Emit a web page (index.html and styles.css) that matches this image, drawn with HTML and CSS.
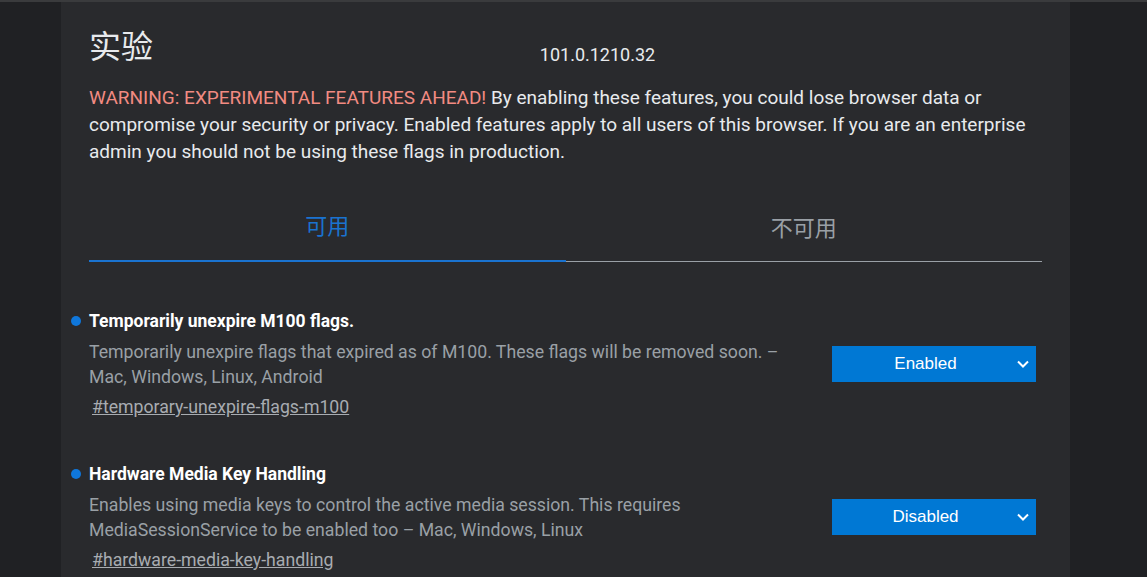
FILE: index.html
```html
<!DOCTYPE html>
<html lang="zh-CN">
<head>
    <meta charset="UTF-8">
    <meta name="viewport" content="width=device-width, initial-scale=1.0">
    <title>实验</title>
    <link rel="stylesheet" href="styles.css">
</head>
<body>
    <main class="page">
        <header class="header">
            <h1>实验</h1>
            <div class="version">101.0.1210.32</div>
        </header>
        <p class="blurb">
            <span class="warning">WARNING: EXPERIMENTAL FEATURES AHEAD!</span>
            By enabling these features, you could lose browser data or compromise your security or privacy. Enabled features apply to all users of this browser. If you are an enterprise admin you should not be using these flags in production.
        </p>

        <nav class="tabs">
            <a href="#available" class="tab active">可用</a>
            <a href="#unavailable" class="tab">不可用</a>
        </nav>

        <section class="flags">
            <div class="flag">
                <div class="flag-text">
                    <h3 class="flag-name"><span class="dot"></span>Temporarily unexpire M100 flags.</h3>
                    <p class="flag-desc">Temporarily unexpire flags that expired as of M100. These flags will be removed soon. – Mac, Windows, Linux, Android</p>
                    <a href="#temporary-unexpire-flags-m100" class="permalink">#temporary-unexpire-flags-m100</a>
                </div>
                <div class="select">
                    <span>Enabled</span>
                    <svg class="chevron" width="12" height="8" viewBox="0 0 12 8"><path d="M1 1.5 6 6.5 11 1.5" fill="none" stroke="#fff" stroke-width="2"/></svg>
                </div>
            </div>

            <div class="flag">
                <div class="flag-text">
                    <h3 class="flag-name"><span class="dot"></span>Hardware Media Key Handling</h3>
                    <p class="flag-desc">Enables using media keys to control the active media session. This requires MediaSessionService to be enabled too – Mac, Windows, Linux</p>
                    <a href="#hardware-media-key-handling" class="permalink">#hardware-media-key-handling</a>
                </div>
                <div class="select">
                    <span>Disabled</span>
                    <svg class="chevron" width="12" height="8" viewBox="0 0 12 8"><path d="M1 1.5 6 6.5 11 1.5" fill="none" stroke="#fff" stroke-width="2"/></svg>
                </div>
            </div>
        </section>
    </main>
</body>
</html>
```

FILE: styles.css
```css
* {
    margin: 0;
    padding: 0;
    box-sizing: border-box;
}
body {
    font-family: Roboto, "Noto Sans CJK SC", sans-serif;
    background-color: #202124;
    border-top: 2px solid #3a3b3d;
    color: #e8eaed;
    height: 100vh;
    overflow: hidden;
}
.page {
    width: 1009px;
    margin-left: 61px;
    min-height: 100%;
    background-color: #292a2d;
    padding: 24px 28px 0;
}
.header {
    display: flex;
    align-items: center;
}
.header h1 {
    font-size: 32px;
    font-weight: normal;
    line-height: 42px;
}
.version {
    flex: 1;
    text-align: center;
    font-size: 18px;
    padding-top: 15px;
}
.blurb {
    margin-top: 16px;
    font-size: 19px;
    line-height: 27px;
}
.warning {
    color: #f28b82;
}
.tabs {
    display: flex;
    margin-top: 40px;
    border-bottom: 1px solid #9aa0a6;
}
.tab {
    flex: 1;
    text-align: center;
    font-size: 22px;
    color: #9aa0a6;
    text-decoration: none;
    padding: 10px 0 17px;
    line-height: 28px;
}
.tab.active {
    color: #1a73d0;
    border-bottom: 2px solid #1a73d0;
    margin-bottom: -1px;
    padding-top: 8px;
    padding-bottom: 19px;
}
.flags {
    padding-top: 49px;
}
.flag {
    display: flex;
    align-items: center;
    justify-content: space-between;
    margin-bottom: 46px;
}
.flag-name {
    position: relative;
    font-size: 17.5px;
    font-weight: bold;
    line-height: 20px;
    color: #ffffff;
}
.dot {
    position: absolute;
    left: -18px;
    top: 5px;
    width: 10px;
    height: 10px;
    border-radius: 50%;
    background-color: #0f77db;
}
.flag-desc {
    margin-top: 9px;
    width: 710px;
    font-size: 17.7px;
    line-height: 25px;
    color: #9aa0a6;
}
.permalink {
    display: inline-block;
    margin: 6px 0 0 3px;
    font-size: 17.7px;
    line-height: 22px;
    color: #a8acb1;
}
.select {
    display: flex;
    align-items: center;
    width: 204px;
    height: 36px;
    margin: 0 6px 2px 0;
    background-color: #0078d4;
    font-family: "Liberation Sans", Arial, sans-serif;
    font-size: 17px;
    color: #ffffff;
}
.select span {
    flex: 1;
    text-align: center;
    padding-left: 2px;
}
.chevron {
    margin-right: 7px;
}
```
